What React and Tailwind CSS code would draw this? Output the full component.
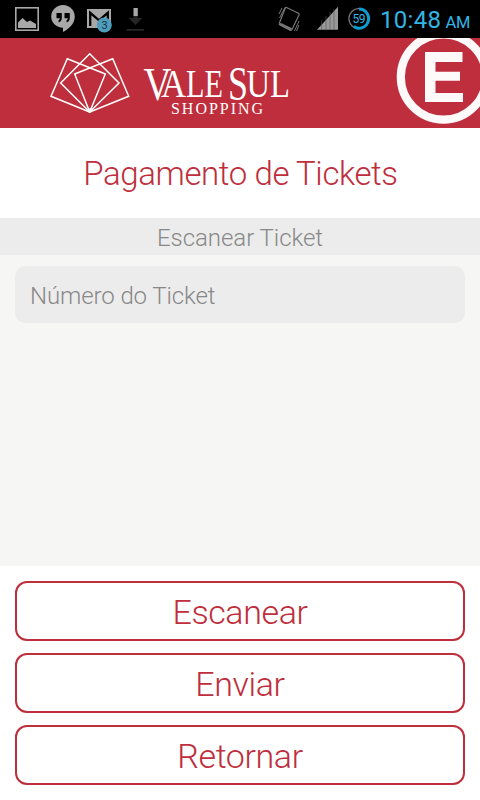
import React from 'react';

function StatusBar() {
  return (
    <div className="h-[38px] bg-black font-normal">
      <svg width="480" height="38" viewBox="0 0 480 38" className="block">
        {/* picture */}
        <rect x="15.800" y="7.800" width="22.400" height="22.400" fill="none" stroke="#a8a8a8" strokeWidth="1.600" />
        <path d="M18 28V22.500L22.500 18L27 22L30 20.500L36 24V28Z" fill="#a8a8a8" />
        {/* hangouts */}
        <path d="M63 5C56.500 5 51.200 10.200 51.200 16.500C51.200 22.800 56.500 27.700 63 27.700V32C69 29 74.800 23.500 74.800 16.500C74.800 10.200 69.500 5 63 5Z" fill="#a8a8a8" />
        <path d="M56.500 13H61.800V18Q61.800 21.500 58.500 22.500V20.500Q59.800 19.800 59.800 18.200H56.500ZM64.500 13H69.800V18Q69.800 21.500 66.500 22.500V20.500Q67.800 19.800 67.800 18.200H64.500Z" fill="#000" />
        {/* gmail */}
        <rect x="87" y="9" width="24" height="19" fill="#a8a8a8" />
        <path d="M90.200 26V12.800L99 20.300L107.800 12.800V26" fill="none" stroke="#000" strokeWidth="2.300" />
        <circle cx="104.300" cy="25" r="7.500" fill="#4f9dbd" />
        <text x="104.500" y="29" textAnchor="middle" fontSize="11" fill="#17323f" fontFamily="Roboto, sans-serif">3</text>
        {/* download */}
        <rect x="133.500" y="8" width="4.300" height="8" fill="#a8a8a8" />
        <path d="M133.500 16H137.800V18H142.500L135.500 25L128.500 18H133.500Z" fill="#262626" />
        <rect x="126.500" y="29" width="17.500" height="1.800" fill="#262626" />
        {/* vibrate */}
        <g fill="none" stroke="#777" strokeWidth="1.200">
          <path d="M286.500 7.500L298.500 13.200Q299.600 13.800 299 15L292 29.500Q291.300 30.800 290 30.200L280 25Q278.800 24.300 279.300 23.200L285.200 8.200Q285.600 7.200 286.500 7.500Z" />
          <path d="M280 23.800L291.500 29.500" strokeWidth="2.600" />
          <path d="M285 7.500L279.500 18M282 8L279 14M299 21L294.500 31M299 25L296.500 31" strokeWidth="1" />
        </g>
        {/* signal */}
        <path d="M317 29.800L338 6.800V29.800Z" fill="#999" />
        <path d="M321.700 20V30M326 16V30M330 12V30M334 9V30" stroke="#555" strokeWidth="0.600" />
        {/* battery ring */}
        <circle cx="359" cy="18.600" r="10.100" fill="none" stroke="#777" strokeWidth="1.200" />
        <path d="M359 9.100A9.500 9.500 0 1 1 353.800 26.500" fill="none" stroke="#0c9bd3" strokeWidth="3" />
        <text x="359" y="23" textAnchor="middle" textLength="13" fontSize="12" fill="#33b5e5" fontFamily="Roboto, sans-serif">59</text>
        <text x="380" y="28" textLength="61" fontSize="24" fill="#33b5e5" fontFamily="Roboto, sans-serif">10:48</text>
        <text x="445.500" y="28" textLength="25" fontSize="16.500" fill="#33b5e5" fontFamily="Roboto, sans-serif">AM</text>
      </svg>
    </div>
  );
}

function Logo() {
  return (
    <svg width="260" height="90" viewBox="40 38 260 90" className="block">
      <g fill="none" stroke="#fff" strokeWidth="1.500">
        <path d="M89.700 112L51 96.300L67.300 58.700L105.300 74Z" />
        <path d="M89.700 112L128.700 96.300L112.700 58.700L74.700 74Z" />
        <path d="M89.700 112L60.700 83L89.700 53.700L119 83Z" />
      </g>
      <circle cx="89.700" cy="110.500" r="2.200" fill="#fff" />
      <g fill="#fff" fontFamily="'Liberation Serif', serif" fontWeight="400">
        <text x="143.500" y="99.500" fontSize="46" textLength="28" lengthAdjust="spacingAndGlyphs">V</text>
        <text x="161" y="97" fontSize="39" textLength="25" lengthAdjust="spacingAndGlyphs">A</text>
        <text x="186" y="97" fontSize="39" textLength="37" lengthAdjust="spacingAndGlyphs">LE</text>
        <text x="228" y="100" fontSize="49" textLength="20" lengthAdjust="spacingAndGlyphs">S</text>
        <text x="246.500" y="97" fontSize="39" textLength="43.500" lengthAdjust="spacingAndGlyphs">UL</text>
        <text x="171" y="113.500" fontSize="16" textLength="92">SHOPPING</text>
      </g>
    </svg>
  );
}

function Header() {
  return (
    <header className="flex h-[90px] justify-between bg-[#be2e3c] pl-10">
      <Logo />
      <svg width="90" height="90" viewBox="390 38 90 90" className="block">
        <circle cx="443.500" cy="77" r="42.700" fill="none" stroke="#fffafa" strokeWidth="8.200" />
        <path d="M425 52H462.500V62H435.500V71.700H460V80.700H435.500V93H463V102H425Z" fill="#fffafa" />
      </svg>
    </header>
  );
}

const actions = ['Escanear', 'Enviar', 'Retornar'];

export default function App() {
  return (
    <div className="flex h-[800px] w-[480px] flex-col overflow-hidden bg-white font-['Roboto',sans-serif] font-light">
      <StatusBar />
      <Header />
      <h1 className="flex h-[90px] items-center justify-center pt-0.5 pl-px text-[33px] tracking-[-0.4px] text-[#be2e3c]">
        Pagamento de Tickets
      </h1>
      <h2 className="flex h-[37px] items-center justify-center bg-[#ececec] pt-0.5 text-2xl tracking-[-0.05px] text-[#888]">
        Escanear Ticket
      </h2>
      <main className="flex-1 bg-[#f6f6f4] px-[15px] pt-[11px]">
        <input
          type="text"
          placeholder="Número do Ticket"
          className="block h-[57px] w-full rounded-[10px] bg-[#ececec] px-[15px] pt-0.5 text-2xl tracking-[-0.1px] text-[#888] outline-none placeholder:text-[#888]"
        />
      </main>
      <footer className="flex flex-col gap-3 p-[15px]">
        {actions.map(label => (
          <button
            key={label}
            className="flex h-[60px] items-center justify-center rounded-xl border-2 border-[#be2e3c] pt-0.5 text-[34px] tracking-[-0.4px] text-[#be2e3c]"
          >
            {label}
          </button>
        ))}
      </footer>
    </div>
  );
}
